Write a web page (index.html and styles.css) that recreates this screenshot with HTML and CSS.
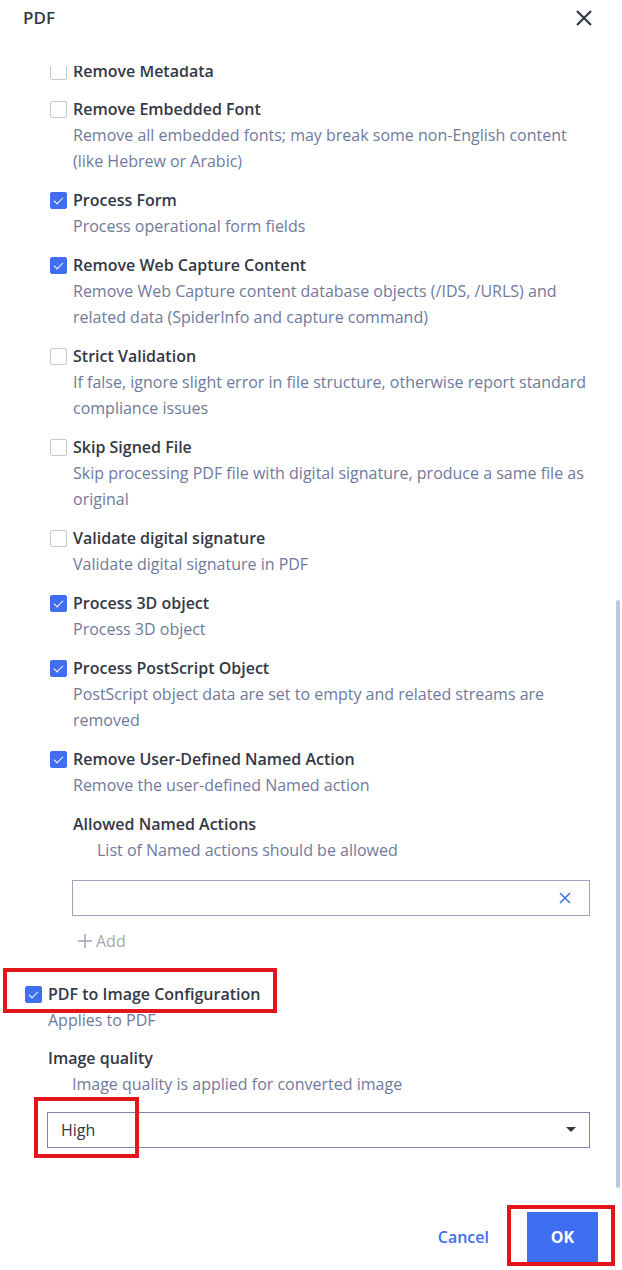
FILE: index.html
```html
<!DOCTYPE html>
<html>
<head>
<meta charset="utf-8">
<link rel="stylesheet" href="styles.css">
</head>
<body>
<div class="dialog">
  <header class="head">
    <span class="head-title">PDF</span>
    <svg class="close" width="18" height="18" viewBox="0 0 18 18"><path d="M2 2 L16 16 M16 2 L2 16" stroke="#333845" stroke-width="2.2" fill="none"/></svg>
  </header>
  <div class="scroll">
    <div class="content">
      <div class="group">
        <div class="item first">
          <div class="row"><span class="cb"></span><span class="title">Remove Metadata</span></div>
        </div>
        <div class="item">
          <div class="row"><span class="cb"></span><span class="title">Remove Embedded Font</span></div>
          <div class="desc">Remove all embedded fonts; may break some non-English content (like Hebrew or Arabic)</div>
        </div>
        <div class="item">
          <div class="row"><span class="cb on"></span><span class="title">Process Form</span></div>
          <div class="desc">Process operational form fields</div>
        </div>
        <div class="item">
          <div class="row"><span class="cb on"></span><span class="title">Remove Web Capture Content</span></div>
          <div class="desc">Remove Web Capture content database objects (/IDS, /URLS) and related data (SpiderInfo and capture command)</div>
        </div>
        <div class="item">
          <div class="row"><span class="cb"></span><span class="title">Strict Validation</span></div>
          <div class="desc">If false, ignore slight error in file structure, otherwise report standard compliance issues</div>
        </div>
        <div class="item">
          <div class="row"><span class="cb"></span><span class="title">Skip Signed File</span></div>
          <div class="desc">Skip processing PDF file with digital signature, produce a same file as original</div>
        </div>
        <div class="item">
          <div class="row"><span class="cb"></span><span class="title">Validate digital signature</span></div>
          <div class="desc">Validate digital signature in PDF</div>
        </div>
        <div class="item">
          <div class="row"><span class="cb on"></span><span class="title">Process 3D object</span></div>
          <div class="desc">Process 3D object</div>
        </div>
        <div class="item">
          <div class="row"><span class="cb on"></span><span class="title">Process PostScript Object</span></div>
          <div class="desc">PostScript object data are set to empty and related streams are removed</div>
        </div>
        <div class="item">
          <div class="row"><span class="cb on"></span><span class="title">Remove User-Defined Named Action</span></div>
          <div class="desc">Remove the user-defined Named action</div>
        </div>
        <div class="sub">
          <div class="title">Allowed Named Actions</div>
          <div class="desc indent">List of Named actions should be allowed</div>
          <div class="input">
            <svg width="12" height="12" viewBox="0 0 12 12"><path d="M1 1 L11 11 M11 1 L1 11" stroke="#4a72f0" stroke-width="1.6" fill="none"/></svg>
          </div>
          <div class="add"><svg width="14" height="14" viewBox="0 0 14 14"><path d="M7 0 V14 M0 7 H14" stroke="#a3a7b4" stroke-width="1.5"/></svg><span>Add</span></div>
        </div>
      </div>
      <div class="item top">
        <div class="row mark-wrap"><span class="cb on"></span><span class="title">PDF to Image Configuration</span><span class="mark mark-cfg"></span></div>
        <div class="desc">Applies to PDF</div>
      </div>
      <div class="field">
        <div class="title">Image quality</div>
        <div class="desc indent">Image quality is applied for converted image</div>
        <div class="select mark-wrap">
          <span class="select-val">High</span>
          <svg width="10" height="6" viewBox="0 0 10 6"><path d="M0 0 H10 L5 5 Z" fill="#333845"/></svg>
          <span class="mark mark-high"></span>
        </div>
      </div>
    </div>
    <div class="thumb"></div>
  </div>
  <footer class="foot">
    <button class="cancel">Cancel</button>
    <div class="mark-wrap"><button class="ok">OK</button><span class="mark mark-ok"></span></div>
  </footer>
</div>
</body>
</html>
```
FILE: styles.css
```css
* { box-sizing: border-box; }
html, body { margin: 0; padding: 0; background: #fff; }
body { font-family: "Open Sans", "Liberation Sans", sans-serif; color: #333845; }
.dialog { width: 622px; height: 1270px; display: flex; flex-direction: column; }
.head { height: 66px; flex: none; display: flex; justify-content: space-between; align-items: flex-start; padding: 6px 29px 0 23px; background: #fff; position: relative; z-index: 2; }
.head-title { font-size: 17px; font-weight: 600; line-height: 24px; }
.close { margin-top: 3px; }
.scroll { height: 1129px; flex: none; overflow: hidden; position: relative; }
.content { padding: 0 32px 0 25px; }
.group { padding-left: 25px; }
.item { margin-bottom: 13px; }
.item.first { margin-top: -8px; margin-bottom: 12px; }
.row { display: flex; align-items: center; height: 26px; }
.cb { width: 17px; height: 17px; border: 1px solid #c9c9cd; border-radius: 2px; flex: none; margin-right: 6px; position: relative; }
.cb.on { background: #3f6ef2; border-color: #3f6ef2; }
.cb.on::after { content: ""; position: absolute; left: 5px; top: 2px; width: 4px; height: 8px; border: solid #fff; border-width: 0 1.6px 1.6px 0; transform: rotate(45deg); }
.title { font-size: 16px; font-weight: 600; line-height: 26px; color: #333845; }
.desc { font-size: 16px; line-height: 26px; color: #6f7a9c; padding-left: 23px; }
.sub { padding-left: 23px; }
.sub .desc, .field .desc { padding-left: 0; }
.desc.indent { padding-left: 24px; }
.input { margin-top: 17px; margin-left: -1px; height: 36px; border: 1px solid #9da3bd; display: flex; align-items: center; justify-content: flex-end; padding-right: 18px; }
.add { display: flex; align-items: center; gap: 4px; height: 50px; padding-left: 5px; font-size: 16px; color: #a3a7b4; }
.item.top { margin-top: 15px; margin-bottom: 12px; }
.item.top .desc { padding-left: 23px; }
.field { padding-left: 23px; }
.field .desc.indent { padding-left: 24px; }
.select { margin-top: 15px; margin-left: -1px; height: 36px; border: 1px solid #7d86a8; display: flex; align-items: center; justify-content: space-between; padding: 0 13px 0 13px; }
.select-val { font-size: 16px; color: #333845; }
.mark-wrap { position: relative; }
.mark { position: absolute; border: 4px solid #e3161b; pointer-events: none; }
.mark-cfg { left: -22px; top: -13px; width: 274px; height: 45px; }
.mark-high { left: -14px; top: -16px; width: 105px; height: 61px; }
.mark-ok { left: -20px; top: -7px; width: 108px; height: 61px; }
.thumb { position: absolute; right: 2px; top: 534px; width: 4px; height: 588px; background: #c0c6dd; border-radius: 2px; }
.foot { flex: 1; display: flex; justify-content: flex-end; align-items: center; gap: 38px; padding: 8px 24px 0 0; }
.cancel { border: none; background: none; padding: 0; font-family: inherit; font-size: 16px; font-weight: 600; color: #3f6ef2; }
.ok { border: none; width: 71px; height: 50px; background: #3f6ef2; color: #fff; font-family: inherit; font-size: 16px; font-weight: 700; display: block; }
```
